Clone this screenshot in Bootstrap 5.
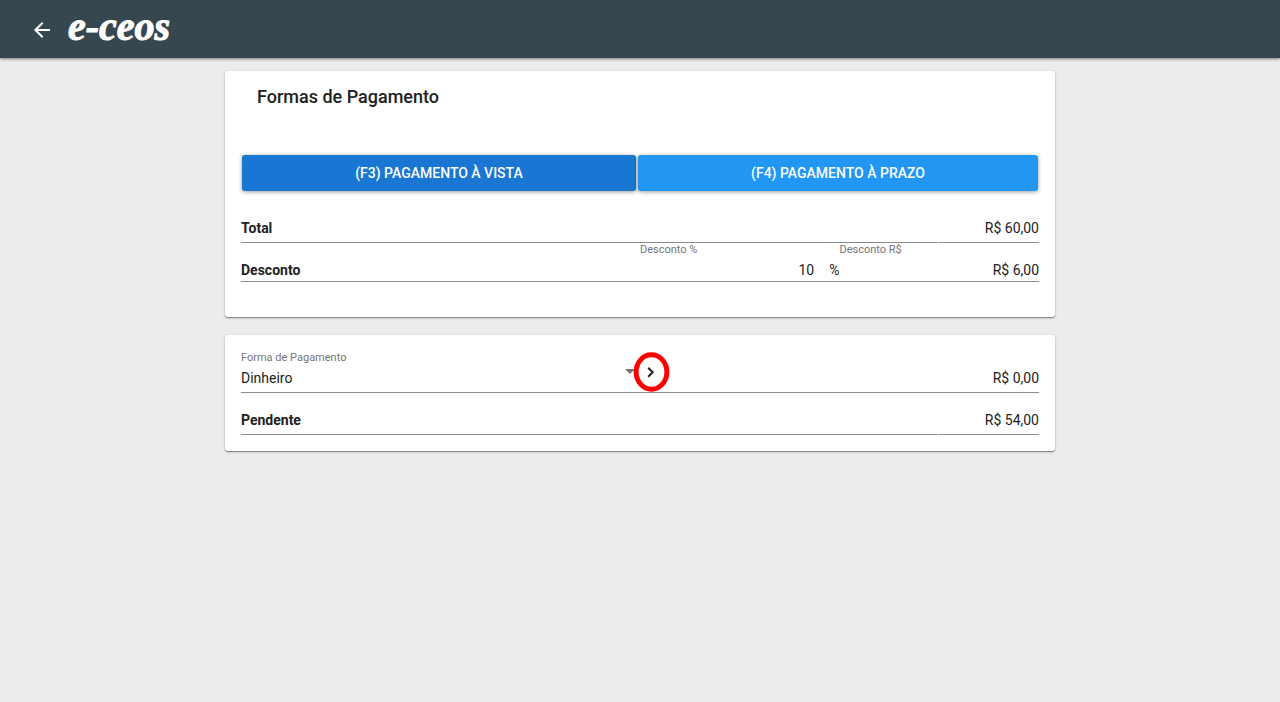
<!DOCTYPE html>
<html lang="pt-BR">
<head>
<meta charset="utf-8">
<meta name="viewport" content="width=device-width, initial-scale=1">
<title>e-ceos - Formas de Pagamento</title>
<link href="https://cdn.jsdelivr.net/npm/bootstrap@5.3.0/dist/css/bootstrap.min.css" rel="stylesheet">
<style>
  body { background: #ececec; color: #212121; font: 14px/20px Roboto, sans-serif; }
  .topbar { background: #37474f; min-height: 58px; padding: 0 32px; box-shadow: 0 1px 3px rgba(0,0,0,.5); }
  .back-btn { width: 20px; height: 20px; }
  .brand { font: italic 700 40px/54px "Liberation Serif", serif; color: #fff; padding-bottom: 4px; -webkit-text-stroke: 1px #fff; }
  .pay-area { max-width: 830px; margin: 13px auto; }
  .pay-card { border-radius: 3px; padding: 16px; margin-bottom: 18px; background: #fff;
    box-shadow: 0 1px 3px rgba(0,0,0,.2), 0 1px 1px rgba(0,0,0,.14), 0 1px 1px rgba(0,0,0,.24); }
  .card-heading { font-size: 18px; line-height: 20px; font-weight: 500; padding: 0 16px; margin-bottom: 48px; }
  .button-row { display: grid; grid-template-columns: 394fr 400fr; gap: 2px; padding: 0 1px; margin-bottom: 22px; }
  .pay-btn { height: 36px; border: 0; border-radius: 3px; padding: 0; font-size: 14px; font-weight: 500;
    box-shadow: 0 1px 4px rgba(0,0,0,.4); }
  .cash, .cash:hover { background: #1976d2; color: #fff; }
  .term, .term:hover { background: #2196f3; color: #fff; }
  .line-row { display: grid; grid-template-columns: 7fr 1fr; column-gap: 1px; }
  .line-row > * { border-bottom: 1px solid #8c8c8c; padding-top: 5px; height: 30px; }
  .discount-row { display: grid; grid-template-columns: 2fr 1fr 1fr; border-bottom: 1px solid #8c8c8c; height: 39px; padding-bottom: 1px; margin-bottom: 19px; }
  .percent-box { gap: 15px; }
  .method-row { border-bottom: 1px solid #8c8c8c; height: 42px; margin-bottom: 12px; }
  .small-label { font-size: 11px; line-height: 14px; color: #757575; }
  .value-input { border: 0; padding: 0; background: transparent; text-align: right; color: inherit; width: 100%; min-width: 0; height: 20px; }
  .method-box { width: calc(50% - 5px); gap: 3px; }
  .method-select { appearance: none; border: 0; padding: 0; background: transparent; color: inherit; height: 20px; width: 100%; }
  .arrow { right: 0; top: 18px; pointer-events: none; }
  .next-btn { width: 38px; height: 42px; margin-left: -2px; z-index: 1; }
  .amount-box { padding-top: 17px; }
</style>
</head>
<body>
<header class="topbar d-flex align-items-center">
  <button class="back-btn btn p-0 border-0 d-flex" type="button" aria-label="Voltar">
    <svg width="20" height="20" viewBox="0 0 20 20" fill="none" stroke="#fff" stroke-width="2"><path d="M18 11H4M10.700 3.700L3.400 11l7.300 7.300"/></svg>
  </button>
  <a class="brand text-decoration-none ms-3" href="#">e-ceos</a>
</header>
<main class="pay-area">
  <section class="pay-card">
    <h1 class="card-heading">Formas de Pagamento</h1>
    <div class="button-row">
      <button class="btn pay-btn cash" type="button">(F3) PAGAMENTO À VISTA</button>
      <button class="btn pay-btn term" type="button">(F4) PAGAMENTO À PRAZO</button>
    </div>
    <div class="line-row">
      <strong>Total</strong><span class="text-end">R$ 60,00</span>
    </div>
    <div class="discount-row">
      <strong class="align-self-end">Desconto</strong>
      <div class="d-flex flex-column justify-content-between">
        <label class="small-label" for="pct">Desconto %</label>
        <div class="percent-box d-flex"><input class="value-input" id="pct" type="text" value="10"><span>%</span></div>
      </div>
      <div class="d-flex flex-column justify-content-between">
        <label class="small-label" for="amount">Desconto R$</label>
        <input class="value-input" id="amount" type="text" value="R$ 6,00">
      </div>
    </div>
  </section>
  <section class="pay-card">
    <div class="method-row d-flex">
      <div class="method-box position-relative d-flex flex-column flex-shrink-0">
        <label class="small-label" for="method">Forma de Pagamento</label>
        <select class="method-select" id="method"><option>Dinheiro</option></select>
        <svg class="arrow position-absolute" width="10" height="5" viewBox="0 0 10 5"><path d="M0 0h10L5 5z" fill="#757575"/></svg>
      </div>
      <button class="next-btn btn p-0 border-0 d-flex flex-shrink-0" type="button" aria-label="Avançar">
        <svg width="38" height="42" viewBox="0 0 38 42" fill="none"><ellipse cx="18.500" cy="21" rx="15.400" ry="17.200" stroke="red" stroke-width="5"/><path d="M15.200 16.700l4.500 4.500-4.500 4.500" stroke="#212121" stroke-width="2"/></svg>
      </button>
      <div class="amount-box flex-grow-1"><input class="value-input d-block" type="text" value="R$ 0,00" aria-label="Valor"></div>
    </div>
    <div class="line-row">
      <strong>Pendente</strong><span class="text-end">R$ 54,00</span>
    </div>
  </section>
</main>
<script src="https://cdn.jsdelivr.net/npm/bootstrap@5.3.0/dist/js/bootstrap.bundle.min.js"></script>
</body>
</html>
